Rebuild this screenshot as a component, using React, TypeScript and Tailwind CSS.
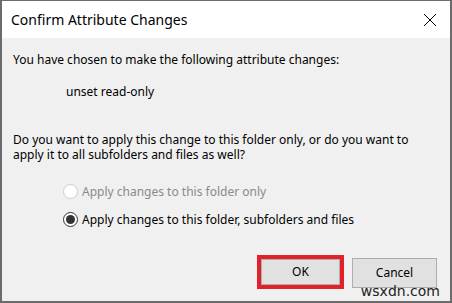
import React from "react";

const font = { fontFamily: '"Segoe UI", "Noto Sans", sans-serif' };

const Radio = ({ checked, disabled, label }: { checked?: boolean; disabled?: boolean; label: string }) => (
  <label className="flex items-center gap-[4px]">
    <span
      className={`flex h-[15px] w-[15px] items-center justify-center rounded-full border bg-white ${
        disabled ? "border-[#cccccc]" : "border-[#333333]"
      }`}
    >
      {checked && <span className="h-[9px] w-[9px] rounded-full bg-[#333333]" />}
    </span>
    <span className={disabled ? "text-[#8a8a8a]" : "text-black"}>{label}</span>
  </label>
);

export default function App() {
  return (
    <div
      className="relative flex h-[303px] w-[452px] flex-col overflow-hidden border-x-2 border-b-2 border-t border-[#6b6b6b] bg-[#f0f0f0] text-[12px] text-black"
      style={font}
    >
      {/* title bar */}
      <div className="flex h-[37px] shrink-0 items-center justify-between bg-white pl-[9px] pr-[13px]">
        <span className="text-[14px] text-black">Confirm Attribute Changes</span>
        <svg width="14" height="14" viewBox="0 0 14 14" className="text-black">
          <path d="M1 1L13 13M13 1L1 13" stroke="currentColor" strokeWidth="1" />
        </svg>
      </div>

      {/* body */}
      <div className="flex flex-1 flex-col pl-[11px] pt-[14px]">
        <p className="leading-[15px]">You have chosen to make the following attribute changes:</p>
        <p className="mt-[17px] pl-[53px] leading-[15px]">unset read-only</p>
        <p className="mt-[33px] w-[420px] leading-[15px]">
          Do you want to apply this change to this folder only, or do you want to apply it to all subfolders and files as well?
        </p>
        <div className="mt-[22px] flex flex-col gap-[13px] pl-[50px] leading-[15px]">
          <Radio disabled label="Apply changes to this folder only" />
          <Radio checked label="Apply changes to this folder, subfolders and files" />
        </div>

        <div className="mt-[28px] flex justify-end gap-[8px] pr-[13px]">
          <div className="border-[4px] border-[#e3212b]">
            <button className="h-[26px] w-[79px] border border-[#adadad] bg-[#e1e1e1] text-[12px]">OK</button>
          </div>
          <button className="mt-[3px] h-[30px] w-[85px] border border-[#adadad] bg-[#e1e1e1] text-[12px]">Cancel</button>
        </div>
      </div>

      <span
        className="absolute bottom-[3px] right-[10px] text-[14px] leading-none text-[#222222]"
        style={{ fontFamily: '"DejaVu Sans", sans-serif' }}
      >
        wsxdn.com
      </span>
    </div>
  );
}
